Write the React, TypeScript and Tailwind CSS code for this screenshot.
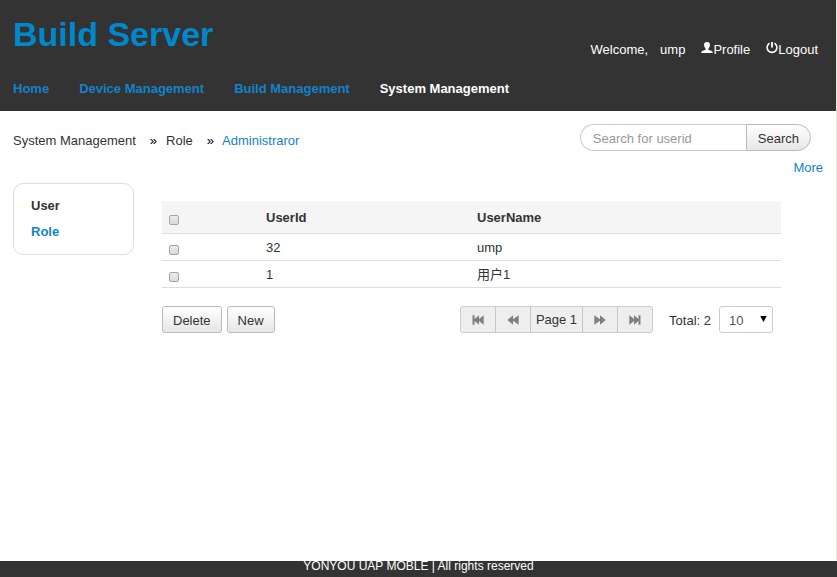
import { useState } from 'react';
import type { ReactNode } from 'react';

const navItems = ['Home', 'Device Management', 'Build Management', 'System Management'];

const users = [
  { id: '32', name: 'ump' },
  { id: '1', name: '用户1' },
];

const buttonLook =
  'h-[27px] cursor-pointer border border-[#bbb] bg-gradient-to-b from-white to-[#e6e6e6] pt-[2px] text-[13px] leading-5 text-[#333]';

function UserIcon() {
  return (
    <svg className="h-3 w-3" viewBox="0 0 12 12" fill="currentColor" aria-hidden="true">
      <path d="M6 0C3.900 0 3.100 1 3.100 2.700c0 1.600.7 2.900 1.500 3.700v1.300C3.300 8.400 0.200 8.500 0.200 11h11.600C11.800 8.500 8.700 8.400 7.400 7.700V6.400C8.200 5.600 8.900 4.300 8.900 2.700 8.900 1 8.100 0 6 0z" />
    </svg>
  );
}

function PowerIcon() {
  return (
    <svg className="h-3 w-3" viewBox="0 0 12 12" fill="none" stroke="currentColor" aria-hidden="true">
      <path d="M3.500 1.300A4.900 4.900 0 1 0 8.500 1.300" strokeWidth="1.600" />
      <path d="M6 0v5.500" strokeWidth="1.800" />
    </svg>
  );
}

function RewindIcon({ bar, flip }: { bar?: boolean; flip?: boolean }) {
  return (
    <svg
      className={flip ? 'h-[10px] w-3 -scale-x-100' : 'h-[10px] w-3'}
      viewBox="0 0 12 10"
      fill="#808080"
      aria-hidden="true"
    >
      {bar ? (
        <path d="M0.500 0.300h2v3.700L7 0.300v3.700L11.700 0.300v9.400L7 6v3.700L2.500 6v3.700h-2z" />
      ) : (
        <path d="M0.300 5L6 0.200v4L11.700 0.200v9.600L6 5.800v4z" />
      )}
    </svg>
  );
}

function PagerButton({ label, children }: { label: string; children: ReactNode }) {
  return (
    <button
      type="button"
      aria-label={label}
      className="flex w-[35px] cursor-pointer items-center justify-center border-r border-[#c5c5c5] pt-px last:w-[34px] last:border-r-0"
    >
      {children}
    </button>
  );
}

function Check({ label }: { label: string }) {
  return (
    <input
      type="checkbox"
      aria-label={label}
      className="block h-[10px] w-[10px] appearance-none rounded-[2px] border border-[#a5a5a5] bg-gradient-to-b from-[#ebebeb] to-[#d9d9d9] checked:bg-[#08c]"
    />
  );
}

export default function App() {
  const [size, setSize] = useState('10');

  return (
    <div className="flex min-h-screen flex-col bg-white font-['Liberation_Sans','Noto_Sans_CJK_SC',sans-serif] text-[13px] leading-5 text-[#333]">
      <div className="flex flex-1 flex-col border-r border-[#e6e6e0]">
        <header className="bg-[#333] px-[13px] pt-3 pb-3">
          <div className="flex justify-between">
            <h1 className="text-[34px] leading-[44px] font-bold text-[#08c]">
              <a href="#home">Build Server</a>
            </h1>
            <div className="flex gap-4 pt-7 pr-[5px] text-white">
              <span className="flex gap-3">
                <span>Welcome,</span>
                <span>ump</span>
              </span>
              <a href="#profile" className="flex">
                <span className="pt-[2px]"><UserIcon /></span>
                Profile
              </a>
              <a href="#logout" className="flex">
                <span className="pt-[2px]"><PowerIcon /></span>
                Logout
              </a>
            </div>
          </div>
          <nav className="flex gap-[30px] pt-[19px] font-bold whitespace-nowrap text-[#1482ca]">
            {navItems.map((item) => (
              <a key={item} href="#nav" className="last:text-white">
                {item}
              </a>
            ))}
          </nav>
        </header>

        <main className="flex-1 px-[13px]">
          <div className="flex justify-between pt-[13px]">
            <nav aria-label="Breadcrumb" className="flex gap-[14px] pt-[7px]">
              <span>System Management</span>
              <span className="flex gap-[9px]">
                <span className="text-black">»</span>
                <span>Role</span>
              </span>
              <span className="flex gap-2">
                <span className="text-black">»</span>
                <a href="#admin" className="text-[#1482ca]">Administraror</a>
              </span>
            </nav>
            <div>
              <form className="flex pr-3" onSubmit={(e) => e.preventDefault()}>
                <input
                  type="text"
                  aria-label="Search for userid"
                  placeholder="Search for userid"
                  className="h-[27px] w-[166px] rounded-l-full border border-r-0 border-[#ccc] bg-white pt-px pr-2 pl-3 text-[13px] outline-none placeholder:text-[#999]"
                />
                <button type="submit" className={`${buttonLook} rounded-r-full px-[11px]`}>
                  Search
                </button>
              </form>
              <div className="pt-[7px] text-right">
                <a href="#more" className="text-[#1482ca]">More</a>
              </div>
            </div>
          </div>

          <div className="flex items-start gap-7 pt-[5px]">
            <aside className="w-[121px] shrink-0 rounded-[10px] border border-[#ddd] px-[17px] pt-[9px] pb-[9px] font-bold">
              <a href="#user" className="block leading-[26px]">User</a>
              <a href="#role" className="block leading-[26px] text-[#1482ca]">Role</a>
            </aside>

            <section className="mr-[42px] flex-1 pt-[18px]">
              <table className="w-full table-fixed border-separate border-spacing-0 text-left [&_td]:border-b [&_td]:border-[#ddd] [&_th]:border-b [&_th]:border-[#ddd]">
                <colgroup>
                  <col className="w-[97px]" />
                  <col className="w-[211px]" />
                  <col />
                </colgroup>
                <thead>
                  <tr className="h-[33px] bg-[#f5f5f5]">
                    <th className="pt-[6px] pl-[7px]"><Check label="Select all" /></th>
                    <th className="pt-px pl-[7px] font-bold">UserId</th>
                    <th className="pt-px pl-[7px] font-bold">UserName</th>
                  </tr>
                </thead>
                <tbody>
                  {users.map((user) => (
                    <tr key={user.id} className="h-[27px]">
                      <td className="pt-[6px] pl-[7px]"><Check label={`Select ${user.name}`} /></td>
                      <td className="pt-[2px] pl-[7px]">{user.id}</td>
                      <td className="pt-[2px] pl-[7px]">{user.name}</td>
                    </tr>
                  ))}
                </tbody>
              </table>

              <div className="flex justify-between pt-[18px] pr-2">
                <div className="flex gap-[5px]">
                  <button type="button" className={`${buttonLook} rounded-[3px] px-[10px]`}>Delete</button>
                  <button type="button" className={`${buttonLook} rounded-[3px] px-[10px]`}>New</button>
                </div>
                <div className="flex items-center">
                  <div className="flex h-[27px] rounded-[3px] border border-[#ccc] bg-[#eee]">
                    <PagerButton label="First page"><RewindIcon bar /></PagerButton>
                    <PagerButton label="Previous page"><RewindIcon /></PagerButton>
                    <span className="border-r border-[#c5c5c5] px-[5px] pt-[3px]">Page 1</span>
                    <PagerButton label="Next page"><RewindIcon flip /></PagerButton>
                    <PagerButton label="Last page"><RewindIcon bar flip /></PagerButton>
                  </div>
                  <label htmlFor="page-size" className="pt-[2px] pr-2 pl-4">Total: 2</label>
                  <div className="relative">
                    <select
                      id="page-size"
                      value={size}
                      onChange={(e) => setSize(e.target.value)}
                      className="block h-[27px] w-[54px] appearance-none rounded-[3px] border border-[#ccc] bg-white pt-[2px] pl-[9px] text-[13px] text-[#555]"
                    >
                      <option>10</option>
                      <option>20</option>
                      <option>50</option>
                    </select>
                    <svg
                      className="pointer-events-none absolute top-[10px] right-[6px] h-[6px] w-[7px]"
                      viewBox="0 0 7 6"
                      aria-hidden="true"
                    >
                      <path d="M0.300 0h6.400L3.500 6z" fill="#000" />
                    </svg>
                  </div>
                </div>
              </div>
            </section>
          </div>
        </main>
      </div>

      <footer className="h-4 bg-[#333] text-center text-xs leading-[10px] text-white">
        YONYOU UAP MOBLE | All rights reserved
      </footer>
    </div>
  );
}
